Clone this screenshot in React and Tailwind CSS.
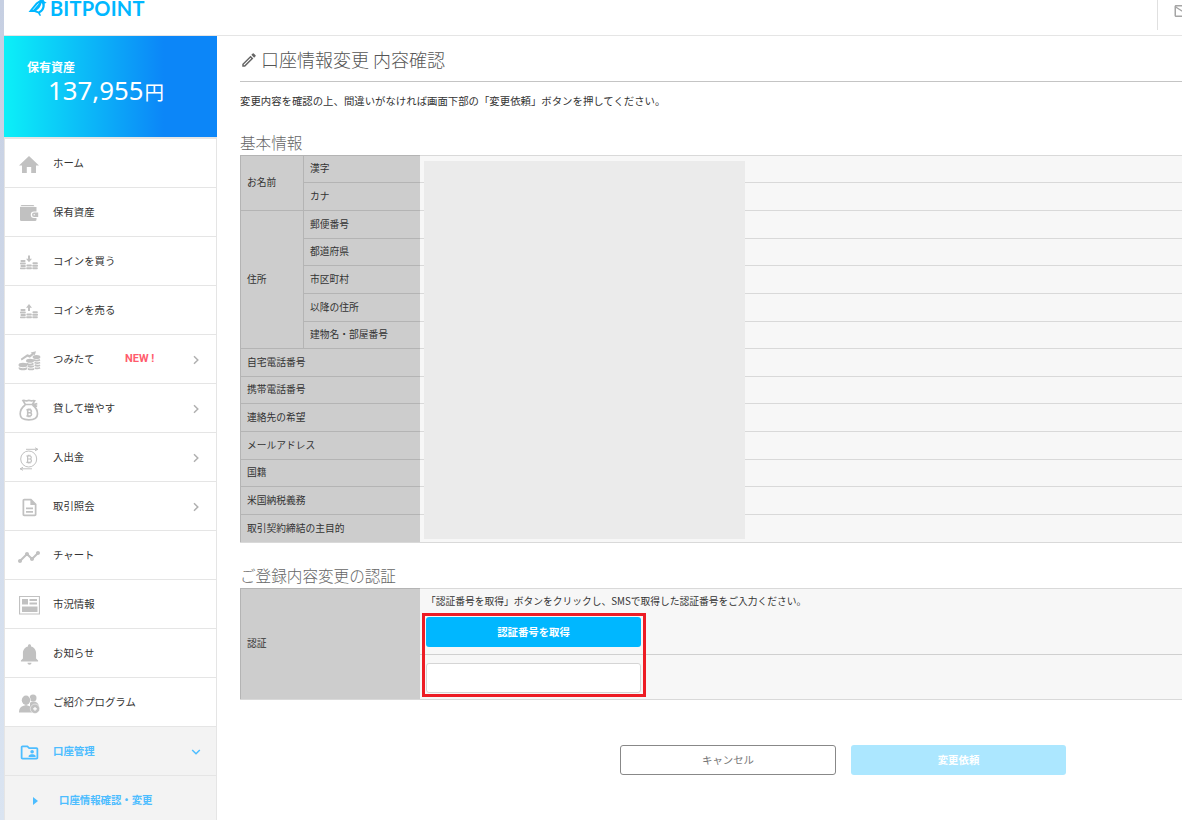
import React from 'react';
import { MdTimeline, MdOutlineDescription, MdOutlineFolderShared, MdOutlineModeEdit, MdMailOutline } from 'react-icons/md';
import { IoMdNotifications } from 'react-icons/io';

function HomeIcon() {
  return (
    <svg viewBox="0 0 20 17" className="w-5 h-[17px]" fill="currentColor">
      <path d="M10 0 0 9.500h3V17h4.800v-6h4.400v6H17V9.500h3z" />
    </svg>
  );
}

function WalletIcon() {
  return (
    <svg viewBox="0 0 20 17" className="w-5 h-[17px]" fill="currentColor">
      <path d="M2.500 0h12l1 1.300H1.300zM1 2h16.500v4.500H15a3.200 3.200 0 0 0 0 6.500h2.500v1.500a1.500 1.500 0 0 1-1.500 1.500H2.200A1.200 1.200 0 0 1 1 14.800z" />
      <path d="M15.200 7.500h4v4.400h-4a2.200 2.200 0 0 1 0-4.400z" />
      <circle cx="15.200" cy="9.700" r=".7" fill="#fff" />
    </svg>
  );
}

function TradeIcon({ up }) {
  return (
    <svg viewBox="0 0 18 15" className="w-[18px] h-[15px]" fill="currentColor">
      <path d={up ? 'M9 0 6 3.800h2V7h2V3.800h2z' : 'M9 7.200 6 3.800h2V.4h2v3.400h2z'} />
      <rect x="0.500" y="5" width="5" height="2" rx=".8" />
      <rect x="0" y="7.500" width="5.800" height="2" rx=".8" />
      <rect x="0.500" y="10" width="5.300" height="2" rx=".8" />
      <rect x="0" y="12.400" width="5.800" height="1.800" rx=".7" />
      <rect x="6.400" y="9.600" width="5.400" height="2" rx=".8" />
      <rect x="6.200" y="12.300" width="5.700" height="1.900" rx=".8" />
      <rect x="12.500" y="7.300" width="5.300" height="2" rx=".8" />
      <rect x="12.300" y="9.800" width="5.700" height="2" rx=".8" />
      <rect x="12.300" y="12.300" width="5.500" height="1.900" rx=".8" />
    </svg>
  );
}

function SavingIcon() {
  return (
    <svg viewBox="0 0 23 20" className="w-[23px] h-5" fill="currentColor">
      <path d="m2.800 7.800 6.400-4.600 2.500.8 2-1.500-1-.9L18 .2l-1.200 4-.9-.8-4 3.300-2.500-.9L3.600 9.400z" />
      <ellipse cx="5" cy="14" rx="4.500" ry="2.200" />
      <path d="M.7 16c1.500 1.500 7 1.500 8.600 0v1.700c-1 2-7.600 2-8.600 0z" />
      <ellipse cx="12" cy="9.800" rx="4" ry="2" />
      <ellipse cx="18.500" cy="6" rx="3.900" ry="2" />
      <g fill="none" stroke="currentColor" strokeWidth="1.800">
        <path d="M8.500 12.500c2 1.200 5 1.200 7 0M9.800 15c2 1 4.300.9 6 0M10 17.800c2 .8 4.300.7 6 0" />
        <path d="M15.200 8.800c2 1 4.800 1 6.800 0M16.500 11.500c2 .8 4 .7 5.600 0M16.700 14.200c2 .8 3.800.7 5.400 0M16.700 17c2 .7 3.800.6 5.400-.2" />
      </g>
    </svg>
  );
}

// Bitcoin sign shared by the lending and deposit icons
function CoinMark({ stroke }) {
  return (
    <path
      d="M7 8h3.500a1.500 1.500 0 0 1 0 3h-2m2 0a1.600 1.600 0 0 1 0 3.300H7M8.300 8v6M9 6.700V8m1.700-1.300V8M9 14.200v1.300m1.700-1.300v1.300"
      fill="none"
      stroke="currentColor"
      strokeWidth={stroke}
    />
  );
}

function LendIcon() {
  return (
    <svg viewBox="0 0 20 22" className="w-5 h-[22px]" fill="none" stroke="currentColor" strokeWidth="1.700">
      <path d="M6.200 5.300 4 1.600c2-.6 3 .8 4.300.2 1.200-.7 2.200-.6 3.400 0 1.200.5 2-.8 4-.1l-2.200 3.600M5.800 5.500h8.500M6.200 6C3 8.200 1.200 11.600 1.200 15c0 4.300 2.500 5.800 8.600 5.800s8.700-1.500 8.700-5.800c0-3.400-1.800-6.800-5-9M14.300 5.600l4-1M14.300 5.600l3.800 2" />
      <g transform="translate(.4 2.700)">
        <CoinMark stroke="1.600" />
      </g>
    </svg>
  );
}

function DepositIcon() {
  return (
    <svg viewBox="0 0 20 24" className="w-5 h-6" fill="none" stroke="currentColor" strokeWidth="1">
      <circle cx="9.700" cy="12" r="8" />
      <path d="M7 2.300h11M16 .8l3 1.500-3 1.500M13 21.800H1.500M4 20.300l-3 1.500 3 1.500" />
      <g transform="translate(.3 1)">
        <CoinMark stroke="1.200" />
      </g>
    </svg>
  );
}

function NewsIcon() {
  return (
    <svg viewBox="0 0 21 19" className="w-[21px] h-[19px]" fill="currentColor">
      <path d="M.5.500h20v17.500H.5z" fill="none" stroke="currentColor" strokeWidth="1.200" />
      <path d="M3 3h6v5.500H3zM10.500 3H18v2h-7.500zM10.500 6.500H18v2h-7.500zM3 10.500h15.500V16H3z" />
    </svg>
  );
}

function ReferralIcon() {
  return (
    <svg viewBox="0 0 21 20" className="w-[21px] h-5" fill="currentColor">
      <circle cx="14" cy="4" r="3.500" />
      <path d="M11 8.500c4-2 8.500-.5 8.700 3.500v3H11z" />
      <ellipse cx="7" cy="6.300" rx="4.700" ry="5.200" fill="#fff" />
      <ellipse cx="7" cy="6.300" rx="4.200" ry="4.700" />
      <path d="M0 18.500c0-5 2.500-6.500 7-7.500 4.500 1 7.500 2.500 7.500 7.500z" />
      <circle cx="16" cy="14.800" r="4.700" stroke="#fff" strokeWidth=".5" />
      <path d="M16 12.900v3.800M14.100 14.800h3.800" stroke="#fff" strokeWidth="1.200" />
    </svg>
  );
}

function Chevron({ down }) {
  return (
    <svg viewBox="0 0 10 10" className="w-2.5 h-2.5" fill="none" stroke="currentColor" strokeWidth="1.500">
      <path d={down ? 'M1.200 3 5 6.800 8.800 3' : 'M3 1.300 6.800 5 3 8.700'} />
    </svg>
  );
}

function BirdLogo() {
  return (
    <svg viewBox="0 0 20 17" className="w-5 h-[17px] shrink-0" fill="#00b7ff">
      <path d="M.5 12 8 2.800 12 0h3.600l.9 1.500 2.200 1.200-2 .9c.6 4.800-1.800 8.600-4.700 9.400L13 15.700h-1.500L10 13.300 6.500 12z" />
      <path d="M13.700 2.800c1.800 3.500.3 7.200-3.300 8.600L8.200 10.600C11 9 12.700 6.500 13.700 2.800z" fill="#fff" />
      <path d="M5 9.800 10.500 3.500" stroke="#fff" strokeWidth=".8" />
    </svg>
  );
}

const MENU = [
  { label: 'ホーム', icon: <HomeIcon /> },
  { label: '保有資産', icon: <WalletIcon /> },
  { label: 'コインを買う', icon: <TradeIcon /> },
  { label: 'コインを売る', icon: <TradeIcon up /> },
  { label: 'つみたて', icon: <SavingIcon />, badge: 'NEW !', more: true },
  { label: '貸して増やす', icon: <LendIcon />, more: true },
  { label: '入出金', icon: <DepositIcon />, more: true },
  { label: '取引照会', icon: <MdOutlineDescription className="w-[21px] h-[21px]" />, more: true },
  { label: 'チャート', icon: <MdTimeline className="w-6 h-6" /> },
  { label: '市況情報', icon: <NewsIcon /> },
  { label: 'お知らせ', icon: <IoMdNotifications className="w-[25px] h-[25px]" /> },
  { label: 'ご紹介プログラム', icon: <ReferralIcon /> },
];

const NAME_ROWS = ['漢字', 'カナ'];
const ADDRESS_ROWS = ['郵便番号', '都道府県', '市区町村', '以降の住所', '建物名・部屋番号'];
const OTHER_ROWS = [
  '自宅電話番号',
  '携帯電話番号',
  '連絡先の希望',
  'メールアドレス',
  '国籍',
  '米国納税義務',
  '取引契約締結の主目的',
];

function HeadCell({ className, children }) {
  return (
    <div className={`flex items-center border-l border-t border-[#b4b4b4] bg-[#cdcdcd] pl-1.5 pb-px ${className}`}>
      {children}
    </div>
  );
}

function ValueCell() {
  return <div className="border-t border-[#d9d9d9] bg-[#f7f7f7]" />;
}

function Sidebar() {
  return (
    <aside className="w-[213px] shrink-0">
      <div className="h-[101px] bg-linear-to-r/srgb from-[#0cf0f8] to-[#0c86f8] to-75% text-white pt-[23px] pl-[23px]">
        <div className="text-[12px] leading-4 font-bold">保有資産</div>
        <div className="flex items-baseline pl-[21px] leading-[30px]">
          <span className="font-['Noto_Sans'] text-[25.8px]">137,955</span>
          <span className="text-[19.5px] ml-px">円</span>
        </div>
      </div>

      <nav className="border-x border-t-2 border-[#e5e5e5] text-[10.4px] text-[#333]">
        {MENU.map((item) => (
          <div key={item.label} className="flex items-center h-[49px] border-b border-[#e5e5e5]">
            <span className="flex justify-center w-12 pt-[3px] text-[#c1c1c1]">{item.icon}</span>
            <span className="w-[72px] whitespace-nowrap">{item.label}</span>
            <span className="w-[60px] pt-px font-['Roboto'] font-bold text-[11px] text-[#ff5c6c]">{item.badge}</span>
            <span className="pl-1.5 pt-0.5 text-[#b0b0b0]">{item.more && <Chevron />}</span>
          </div>
        ))}
        <div className="flex items-center h-[49px] border-b border-[#e5e5e5] bg-[#f3f3f3] text-[#4dbdff] font-bold">
          <span className="flex justify-center w-12 pt-[3px]">
            <MdOutlineFolderShared className="w-[21px] h-[21px]" />
          </span>
          <span className="w-[132px]">口座管理</span>
          <span className="pl-1.5 pt-0.5"><Chevron down /></span>
        </div>
        <div className="flex items-center h-[48px] bg-[#f3f3f3] text-[#4dbdff] font-bold">
          <svg viewBox="0 0 5 8" className="w-[5px] h-2 ml-7 mt-0.5 mr-[21px]" fill="currentColor">
            <path d="M0 0 5 4 0 8z" />
          </svg>
          口座情報確認・変更
        </div>
      </nav>
    </aside>
  );
}

function BasicInfo() {
  return (
    <section className="mt-[19px]">
      <h2 className="h-6 leading-6 text-[15.6px] font-light text-[#666]">基本情報</h2>
      <div className="relative mt-px">
        <div className="grid grid-cols-[63px_117px_1fr] grid-rows-[27px_28px_28px_27px_28px_28px_27px_28px_27px_28px_28px_27px_28px_28px] border-b border-[#d9d9d9] text-[9.75px]">
          <HeadCell className="row-span-2">お名前</HeadCell>
          {NAME_ROWS.map((label) => (
            <React.Fragment key={label}>
              <HeadCell>{label}</HeadCell>
              <ValueCell />
            </React.Fragment>
          ))}
          <HeadCell className="row-span-5">住所</HeadCell>
          {ADDRESS_ROWS.map((label) => (
            <React.Fragment key={label}>
              <HeadCell>{label}</HeadCell>
              <ValueCell />
            </React.Fragment>
          ))}
          {OTHER_ROWS.map((label) => (
            <React.Fragment key={label}>
              <HeadCell className="col-span-2">{label}</HeadCell>
              <ValueCell />
            </React.Fragment>
          ))}
        </div>
        {/* Personal data mask */}
        <div className="absolute left-[184px] top-[6px] w-[321px] h-[378px] bg-[#ebebeb]" />
      </div>
    </section>
  );
}

function Verification() {
  return (
    <section className="mt-5">
      <h2 className="h-[25px] leading-6 text-[15.6px] font-light text-[#666]">ご登録内容変更の認証</h2>
      <div className="flex h-[112px] border-b border-[#d9d9d9] text-[9.75px]">
        <HeadCell className="w-[180px] pb-[3px]">認証</HeadCell>
        <div className="relative flex-1 bg-[#f7f7f7] border-t border-[#d9d9d9]">
          <div className="h-[66px] border-b border-[#d0d0d0] pl-1.5">
            <p className="h-7 leading-[25px]">「認証番号を取得」ボタンをクリックし、SMSで取得した認証番号をご入力ください。</p>
            <button className="block w-[215px] h-[30px] rounded-[3px] bg-[#00b7ff] text-white font-bold text-[10.4px]">
              認証番号を取得
            </button>
          </div>
          <input className="block ml-1.5 mt-2 w-[215px] h-[30px] rounded-[3px] border border-[#d5d5d5] bg-white" />
          <div className="absolute left-0.5 top-6 w-[224px] h-[84px] border-3 border-[#ed1c24]" />
        </div>
      </div>
    </section>
  );
}

export default function App() {
  return (
    <div className="flex h-[820px] overflow-hidden bg-white font-['Noto_Sans_CJK_JP',sans-serif] text-[#333]">
      <div className="w-1 shrink-0 bg-linear-to-b from-[#c6cfe2] to-[#dae4f1]" />
      <div className="flex-1 min-w-0">
        <header className="flex items-start justify-between h-9 border-b border-[#e5e5e5]">
          <div className="flex items-start pl-6">
            <BirdLogo />
            <span className="ml-[2px] font-['Lato'] font-bold text-[20px] leading-4 tracking-[0.2px] text-[#00b7ff]">
              BITPOINT
            </span>
          </div>
          <div className="w-[25px] h-[30px] overflow-hidden border-l border-[#e0e0e0] pl-[15px] pt-0.5 text-[#a5a5a5]">
            <MdMailOutline className="w-[18px] h-[18px]" />
          </div>
        </header>

        <div className="flex">
          <Sidebar />
          <main className="flex-1 min-w-0 pl-[23px]">
            <div className="flex items-center h-[46px] border-b border-[#c4c4c4] pt-0.5">
              <MdOutlineModeEdit className="w-[18px] h-[18px] text-[#666]" />
              <h1 className="ml-[3px] text-[18px] font-light text-[#555]">口座情報変更 内容確認</h1>
            </div>
            <p className="mt-[9px] h-5 leading-5 text-[10.4px]">
              変更内容を確認の上、間違いがなければ画面下部の「変更依頼」ボタンを押してください。
            </p>
            <BasicInfo />
            <Verification />
            <div className="flex gap-[15px] mt-[45px] pl-[380px] text-[10.4px]">
              <button className="w-[216px] h-[30px] rounded-[3px] border border-[#888] text-[#777]">キャンセル</button>
              <button className="w-[215px] h-[30px] rounded-[3px] bg-[#ace7ff] text-white font-bold">変更依頼</button>
            </div>
          </main>
        </div>
      </div>
    </div>
  );
}
